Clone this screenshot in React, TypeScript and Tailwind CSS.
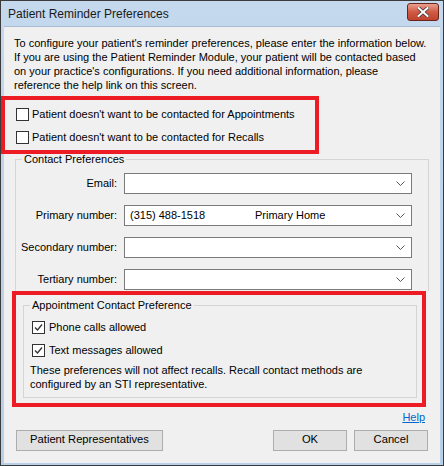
import React from 'react';

function CheckBox({ checked }: { checked?: boolean }) {
  return (
    <span className="flex h-[13px] w-[13px] shrink-0 items-center justify-center border border-[#333333] bg-white">
      {checked && (
        <svg width="9" height="9" viewBox="0 0 9 9" fill="none">
          <path d="M1 4.5 L3.5 7 L8 1.5" stroke="#333333" strokeWidth="1.3" />
        </svg>
      )}
    </span>
  );
}

function Combo({ label, value, kind }: { label: string; value?: string; kind?: string }) {
  return (
    <div className="flex items-center">
      <div className="w-[102px] pr-[1px] text-right">{label}</div>
      <div className="ml-[6px] flex h-[21px] w-[288px] items-center border border-[#7a7a7a] bg-white pl-[5px] pr-[6px]">
        <span className="w-[125px]">{value}</span>
        <span className="flex-1">{kind}</span>
        <svg width="9" height="6" viewBox="0 0 9 6" fill="none">
          <path d="M0.5 0.5 L4.5 4.5 L8.5 0.5" stroke="#555555" strokeWidth="1" />
        </svg>
      </div>
    </div>
  );
}

function WinButton({ children, width }: { children: React.ReactNode; width: string }) {
  return (
    <button className={`h-[21px] ${width} border border-[#adadad] bg-[#e1e1e1] text-[11.2px] leading-none text-black`}>
      {children}
    </button>
  );
}

export default function App() {
  return (
    <div className="flex h-[466px] w-[444px] flex-col border border-[#3b3b3b] bg-gradient-to-b from-[#c4d8ee] to-[#b8cfe8] font-['Liberation_Sans',Arial,sans-serif] text-[11px] text-black">
      <div className="flex h-[25px] shrink-0 items-center justify-between pl-[7px] pr-[4px]">
        <span className="text-[12px] text-[#1a1a1a]">Patient Reminder Preferences</span>
        <div className="mt-[-3px] flex h-[18px] w-[32px] items-center justify-center rounded-[3px] border border-[#6b2419] bg-gradient-to-b from-[#e8a08f] via-[#cf5a43] to-[#c0432e]">
          <svg width="12" height="10" viewBox="0 0 12 10">
            <path d="M1.5 1 L10.5 9 M10.5 1 L1.5 9" stroke="#4a3a38" strokeWidth="3.6" strokeLinecap="square" />
            <path d="M1.5 1 L10.5 9 M10.5 1 L1.5 9" stroke="#ffffff" strokeWidth="2" strokeLinecap="square" />
          </svg>
        </div>
      </div>

      <div className="mx-[3px] mb-[2px] flex-1 border-t border-[#a9bcd3] bg-[#f0f0f0]">
        <p className="ml-[10px] mt-[9px] whitespace-nowrap leading-[14px]">
          To configure your patient's reminder preferences, please enter the information below.<br />
          If you are using the Patient Reminder Module, your patient will be contacted based<br />
          on your practice's configurations. If you need additional information, please<br />
          reference the help link on this screen.
        </p>

        <div className="ml-[-3px] mt-[4px] h-[58px] w-[318px] border-[4px] border-[#ed1c24] pl-[11px] pt-[8px]">
          <div className="flex items-center gap-[3px] leading-[13px]">
            <CheckBox />
            <span>Patient doesn't want to be contacted for Appointments</span>
          </div>
          <div className="mt-[10px] flex items-center gap-[3px] leading-[13px]">
            <CheckBox />
            <span>Patient doesn't want to be contacted for Recalls</span>
          </div>
        </div>

        <fieldset className="ml-[11px] mr-[11px] mt-[-1px] border border-b-0 border-[#d5d5d5] pb-[1px]">
          <legend className="ml-[6px] px-[2px] leading-[13px]">Contact Preferences</legend>
          <div className="mt-[7px] flex flex-col gap-[11px]">
            <Combo label="Email:" />
            <Combo label="Primary number:" value="(315) 488-1518" kind="Primary Home" />
            <Combo label="Secondary number:" />
            <Combo label="Tertiary number:" />
          </div>
        </fieldset>

        <div className="ml-[8px] h-[116px] w-[414px] border-[4px] border-[#ed1c24]">
          <fieldset className="ml-[7px] mr-[5px] mt-[4px] h-[99px] border border-[#d5d5d5]">
            <legend className="ml-[6px] px-[2px] leading-[13px]">Appointment Contact Preference</legend>
            <div className="ml-[8px] mt-[9px] flex items-center gap-[4px] leading-[13px]">
              <CheckBox checked />
              <span>Phone calls allowed</span>
            </div>
            <div className="ml-[8px] mt-[10px] flex items-center gap-[4px] leading-[13px]">
              <CheckBox checked />
              <span>Text messages allowed</span>
            </div>
            <p className="ml-[6px] mt-[6px] leading-[14px]">
              These preferences will not affect recalls. Recall contact methods are<br />
              configured by an STI representative.
            </p>
          </fieldset>
        </div>

        <div className="mr-[15px] mt-[2px] flex justify-end">
          <a className="text-[#0066cc] underline">Help</a>
        </div>

        <div className="mt-[4px] flex items-center pl-[12px] pr-[12px]">
          <WinButton width="w-[147px]">Patient Representatives</WinButton>
          <div className="flex-1" />
          <WinButton width="w-[74px]">OK</WinButton>
          <div className="w-[7px]" />
          <WinButton width="w-[74px]">Cancel</WinButton>
        </div>
      </div>
    </div>
  );
}
